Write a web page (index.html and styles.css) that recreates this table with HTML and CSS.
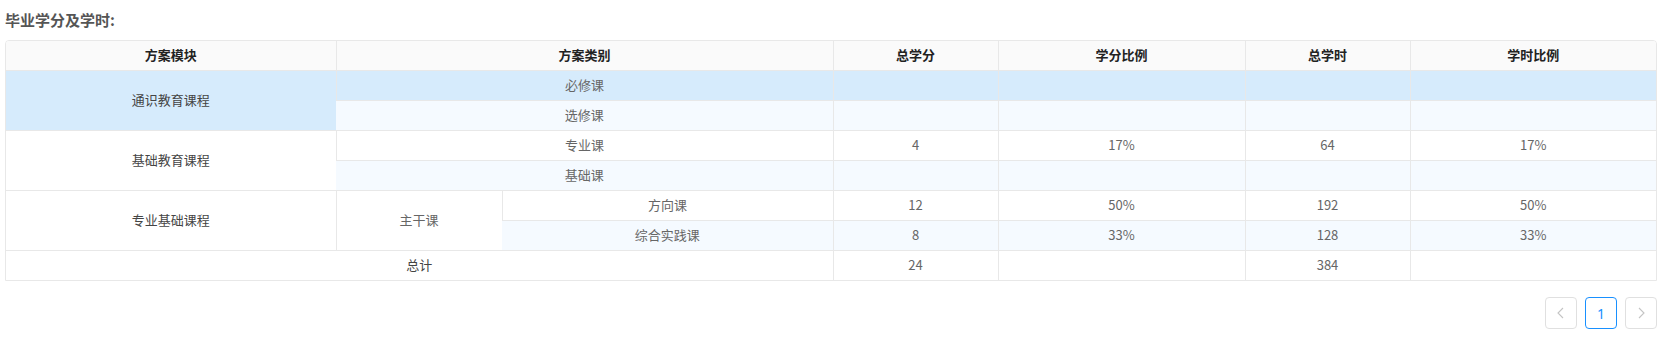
FILE: index.html
```html
<!DOCTYPE html>
<html lang="zh-CN">
<head>
<meta charset="utf-8">
<title>毕业学分及学时</title>
<link rel="stylesheet" href="styles.css">
</head>
<body>
<div class="page">
  <div class="title">毕业学分及学时:</div>
  <div class="table-wrap">
    <table class="credit-table">
      <colgroup>
        <col class="w-module"><col class="w-type"><col class="w-sub"><col class="w-narrow"><col class="w-wide"><col class="w-narrow"><col class="w-last">
      </colgroup>
      <thead>
        <tr>
          <th>方案模块</th>
          <th colspan="2">方案类别</th>
          <th>总学分</th>
          <th>学分比例</th>
          <th>总学时</th>
          <th>学时比例</th>
        </tr>
      </thead>
      <tbody>
        <tr class="hover">
          <td rowspan="2" class="module">通识教育课程</td>
          <td colspan="2">必修课</td>
          <td></td><td></td><td></td><td></td>
        </tr>
        <tr class="stripe">
          <td colspan="2">选修课</td>
          <td></td><td></td><td></td><td></td>
        </tr>
        <tr>
          <td rowspan="2" class="module">基础教育课程</td>
          <td colspan="2">专业课</td>
          <td>4</td><td>17%</td><td>64</td><td>17%</td>
        </tr>
        <tr class="stripe">
          <td colspan="2">基础课</td>
          <td></td><td></td><td></td><td></td>
        </tr>
        <tr>
          <td rowspan="2" class="module">专业基础课程</td>
          <td rowspan="2">主干课</td>
          <td>方向课</td>
          <td>12</td><td>50%</td><td>192</td><td>50%</td>
        </tr>
        <tr class="stripe">
          <td>综合实践课</td>
          <td>8</td><td>33%</td><td>128</td><td>33%</td>
        </tr>
        <tr>
          <td colspan="3" class="module">总计</td>
          <td>24</td><td></td><td>384</td><td></td>
        </tr>
      </tbody>
    </table>
  </div>
  <div class="pagination">
    <button class="page-item disabled" aria-label="上一页">
      <svg width="12" height="12" viewBox="0 0 12 12"><path d="M8 1 L3 6 L8 11" fill="none" stroke="#c4c4c4" stroke-width="1.1"/></svg>
    </button>
    <button class="page-item active">1</button>
    <button class="page-item disabled" aria-label="下一页">
      <svg width="12" height="12" viewBox="0 0 12 12"><path d="M4 1 L9 6 L4 11" fill="none" stroke="#c4c4c4" stroke-width="1.1"/></svg>
    </button>
  </div>
</div>
</body>
</html>
```
FILE: styles.css
```css
* { box-sizing: border-box; }
html, body { margin: 0; padding: 0; background: #fff; }
body {
  font-family: "Noto Sans CJK SC", "Noto Sans", sans-serif;
  color: #666;
  font-size: 13px;
}
.page {
  width: 1664px;
  padding: 0 7px 0 5px;
}
.title {
  height: 40px;
  line-height: 40px;
  font-size: 15px;
  font-weight: bold;
  color: #555;
}
.table-wrap {
  border: 1px solid #e8e8e8;
  border-radius: 4px 4px 0 0;
  overflow: hidden;
}
.credit-table {
  width: 1650px;
  border-collapse: collapse;
  table-layout: fixed;
}
.w-module { width: 330px; }
.w-type { width: 166px; }
.w-sub { width: 331px; }
.w-narrow { width: 165px; }
.w-wide { width: 247px; }
.w-last { width: 246px; }
.credit-table th,
.credit-table td {
  height: 30px;
  padding: 0;
  text-align: center;
  vertical-align: middle;
  border-left: 1px solid #e8e8e8;
  border-top: 1px solid #e8e8e8;
  line-height: 18px;
}
.credit-table tr > :first-child { border-left: none; }
.credit-table thead th {
  border-top: none;
  height: 29px;
  background: #fafafa;
  color: #222;
  font-weight: bold;
  font-size: 13px;
}
.credit-table td { color: #666; }
.credit-table td.module { color: #444; }
.credit-table tr.stripe td { background: #f5faff; }
.credit-table tr.hover td { background: #d6ebfc; }
.pagination {
  display: flex;
  justify-content: flex-end;
  gap: 8px;
  margin-top: 16px;
}
.page-item {
  width: 32px;
  height: 32px;
  padding: 0;
  border: 1px solid #d9d9d9;
  border-radius: 4px;
  background: #fff;
  font-family: "Noto Sans", sans-serif;
  font-size: 14px;
  color: #1890ff;
  display: flex;
  align-items: center;
  justify-content: center;
}
.page-item.active { border-color: #1890ff; }
.page-item.disabled { border-color: #e0e0e0; }
```
